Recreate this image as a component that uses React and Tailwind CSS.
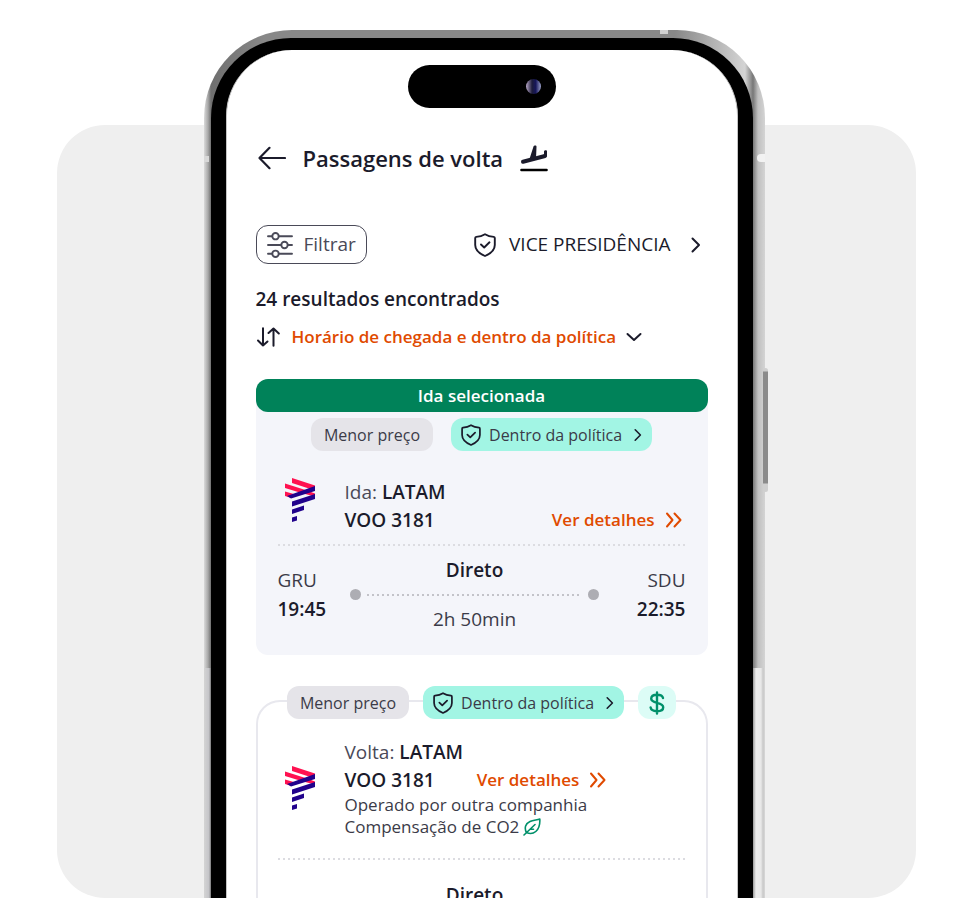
function BackIcon() {
  return (
    <svg viewBox="0 0 28 24" className="h-6 w-7" fill="none" stroke="currentColor" strokeWidth="2.200" strokeLinecap="round" strokeLinejoin="round" aria-hidden="true">
      <path d="M27 12H1.500M11.500 1.800L1.500 12 11.500 22.200" />
    </svg>
  )
}

function SortIcon() {
  return (
    <svg viewBox="0 0 24 20" className="h-5 w-6" fill="none" stroke="currentColor" strokeWidth="2" strokeLinecap="round" strokeLinejoin="round" aria-hidden="true">
      <path d="M7 1.200V18.500M2 13.500L7 18.500 11.500 14.500" />
      <path d="M17.500 18.800V1.500M12.500 6L17.500 1.500 22.800 6.500" />
    </svg>
  )
}

function ChevronRightIcon({ className }) {
  return (
    <svg viewBox="0 0 10 16" className={className} fill="none" stroke="currentColor" strokeWidth="2" strokeLinecap="round" strokeLinejoin="round" aria-hidden="true">
      <path d="M1.500 1.500L8 8 1.500 14.500" />
    </svg>
  )
}

function ChevronDownIcon() {
  return (
    <svg viewBox="0 0 16 10" className="h-[10px] w-4 text-[#1b1b2b]" fill="none" stroke="currentColor" strokeWidth="2" strokeLinecap="round" strokeLinejoin="round" aria-hidden="true">
      <path d="M1.500 2L8 8 14.500 2" />
    </svg>
  )
}

function DoubleChevronIcon() {
  return (
    <svg viewBox="0 0 17 16" className="h-4 w-[17px]" fill="none" stroke="currentColor" strokeWidth="2" strokeLinecap="round" strokeLinejoin="round" aria-hidden="true">
      <path d="M2 1.500L7.500 8 2 14.500M9.500 1.500L15.500 8 9.500 14.500" />
    </svg>
  )
}

function ShieldIcon({ className }) {
  return (
    <svg viewBox="0 0 22 24" className={className} fill="none" stroke="currentColor" strokeWidth="1.900" strokeLinecap="round" strokeLinejoin="round" aria-hidden="true">
      <path d="M11 1.200C8.500 2.700 5.500 3.600 2.200 3.900c-.6.100-1 .5-1 1.100V12c0 5.200 4 8.500 9.800 11 5.800-2.500 9.800-5.800 9.800-11V5c0-.6-.4-1-1-1.100C16.500 3.600 13.500 2.700 11 1.200z" />
      <path d="M7 11.500l3.200 3L15.500 9.300" />
    </svg>
  )
}

function LandingIcon() {
  return (
    <svg viewBox="0 0 28 28" className="size-7" fill="none" strokeLinecap="round" aria-hidden="true">
      <path d="M3 17.800L25 12" stroke="#1b1b2b" strokeWidth="4" />
      <path d="M20.500 12.500L24 10.500V7.500c0-1.400 3-1.700 3-.3V12.500z" fill="#1b1b2b" />
      <path d="M9 16.500L13.500 2.500c.5-1.500 3.300-1.500 3 .3L16 15z" fill="#1b1b2b" />
      <path d="M1.400 26H26.600" stroke="#000" strokeWidth="2.400" />
    </svg>
  )
}

function FilterIcon() {
  return (
    <svg viewBox="0 0 26 26" className="size-[26px]" fill="none" stroke="currentColor" strokeWidth="1.900" strokeLinecap="round" aria-hidden="true">
      <path d="M1 4.200h4M12 4.200h13M1 13h13M21 13h4M1 21.800h4M12 21.800h13" />
      <circle cx="8.500" cy="4.200" r="3.200" />
      <circle cx="17.500" cy="13" r="3.200" />
      <circle cx="8.500" cy="21.800" r="3.200" />
    </svg>
  )
}

function LeafIcon() {
  return (
    <svg viewBox="0 0 18 18" className="size-[18px] text-[#00906a]" fill="none" stroke="currentColor" strokeWidth="1.600" strokeLinecap="round" strokeLinejoin="round" aria-hidden="true">
      <path d="M3.500 14.500C1 10 2.500 5.500 7 3.500 10 2.200 13.500 2 16.800 1c.3 5-.8 9.800-4 12.500-2.800 2.300-6.500 2.300-9.300 1z" />
      <path d="M1 17L12 6.500M7.500 11.200h3" />
    </svg>
  )
}

function LatamLogo() {
  return (
    <svg viewBox="0 0 30 44" className="h-11 w-[30px] shrink-0" role="img" aria-label="LATAM">
      <g fill="#ff1150">
        <path d="M7 0L30 7.500V12.500L7 5z" />
        <path d="M0 5.500L22 12.500 30 15.500V18.500L18 15.500 0 10z" />
        <path d="M0 13.500L14 17.500 5 19.500 0 18z" />
      </g>
      <g fill="#21028c">
        <path d="M30 8V13L6 20.500 2 18z" />
        <path d="M30 16V21L7 28.500V23.500z" />
        <path d="M19 27.500V32L7 36V31.500z" />
        <path d="M12 38V42.500L7 44V39.500z" />
      </g>
    </svg>
  )
}

function DollarIcon() {
  return (
    <svg viewBox="0 0 16 24" className="h-6 w-4 text-[#00906a]" fill="none" stroke="currentColor" strokeWidth="2.400" strokeLinecap="round" strokeLinejoin="round" aria-hidden="true">
      <path d="M8 1.500v21M14 7C13.500 4.500 11 3.700 8 3.700 4.500 3.700 2.200 5 2.200 7.700c0 5.300 12 3 12 8.500 0 2.800-2.700 4-6.200 4-3.400 0-6-1-6.400-3.800" />
    </svg>
  )
}

function Badges({ selected }) {
  return (
    <div className={selected ? "flex justify-center gap-[18px]" : "flex justify-center gap-[14px]"}>
      <span className="flex h-[33px] items-center rounded-xl bg-[#e5e4e9] px-[13px] text-[#3b3b48]">Menor preço</span>
      <button className="flex h-[33px] items-center rounded-xl bg-[#a2f5e4] px-[10px] text-[#3b3b48]">
        <ShieldIcon className="h-[22px] w-5 text-[#1b1b2b]" />
        <span className="ml-2 mr-3">Dentro da política</span>
        <ChevronRightIcon className="h-[14px] w-2 text-[#1b1b2b]" />
      </button>
      {!selected && (
        <span className="flex h-[33px] w-[38px] items-center justify-center rounded-xl bg-[#dcfcf6]">
          <DollarIcon />
        </span>
      )}
    </div>
  )
}

function DetailsLink() {
  return (
    <a href="#detalhes" className="flex items-center gap-[10px] text-[17px] font-semibold text-[#e04a00]">
      Ver detalhes
      <DoubleChevronIcon />
    </a>
  )
}

function Divider() {
  return <div className="h-[2px] flex-1 bg-[linear-gradient(to_right,#dcdce1_2px,transparent_2px)] bg-[length:5px_2px]" />
}

function RouteLine() {
  return (
    <div className="my-[5px] flex items-center gap-[6px]">
      <span className="size-[11px] rounded-full bg-[#adadb3]" />
      <div className="h-[2px] flex-1 bg-[linear-gradient(to_right,#c3c3c9_2px,transparent_2px)] bg-[length:5px_2px]" />
      <span className="size-[11px] rounded-full bg-[#adadb3]" />
    </div>
  )
}

function Airport({ code, time, className }) {
  return (
    <div className={className}>
      <p className="text-[#3b3b48]">{code}</p>
      <p className="font-semibold">{time}</p>
    </div>
  )
}

function PhoneFrame({ children }) {
  return (
    <div className="relative mx-auto w-full max-w-[561px] rounded-t-[88px] bg-[linear-gradient(to_right,#dadada_0px,#a8a8a8_4px,#6f6f6f_7px,#888_60px,#888_calc(100%-90px),#b4b4b4_calc(100%-50px),#d4d4d4_calc(100%-20px),#777_calc(100%-12px),#c0c0c0_calc(100%-7px),#d4d4d4_100%)] pl-[7px] pr-[12px] pt-2">
      {/* side button */}
      <span className="absolute -right-[3px] top-[338px] h-[124px] w-[5px] rounded-sm bg-[linear-gradient(#cfcfcf_3px,#8b8b8b_4px,#8b8b8b_115px,#cfcfcf_116px)]" />
      {/* antenna bands */}
      <span className="absolute left-0 top-[126px] h-[6px] w-[5px] bg-[#d8d8d8]" />
      <span className="absolute right-0 top-[124px] h-2 w-2 rounded-l-full bg-[#f2f2f2]" />
      <span className="absolute right-[97px] top-0 h-1 w-2 bg-[#d0d0d0]" />
      {/* lighter reflection on the lower sides */}
      <span className="absolute bottom-0 left-0 top-[638px] w-[7px] bg-[linear-gradient(to_right,#d4d4d4,#c4c4c8_5px,#777)]" />
      <span className="absolute bottom-0 right-0 top-[638px] w-[12px] bg-[linear-gradient(to_right,#999,#ececec_3px,#e8e8e8_8px,#c8c8c8_10px,#d8d8d8)]" />
      <div className="rounded-t-[80px] bg-black px-[15px] pt-3">
        <div className="rounded-t-[66px] border-x border-[#c4c4c4] bg-white px-[29px] pt-[15px]">{children}</div>
      </div>
    </div>
  )
}

export default function App() {
  return (
    <main className="grid overflow-hidden bg-white font-['Open_Sans',sans-serif] text-[#1b1b2b]">
      <div className="col-start-1 row-start-1 ml-[57px] mr-[56px] mt-[125px] rounded-[48px] bg-[#efefef]" />

      <div className="col-start-1 row-start-1 pr-1 pt-[30px]">
        <PhoneFrame>
          <div className="mx-auto flex h-[43px] w-[148px] items-center justify-end rounded-full bg-black pr-[15px]">
            <span className="size-[15px] rounded-full bg-[linear-gradient(to_right,#b9a9c9,#1d1c3a_40%,#16165a_65%,#9aa0c8)]" />
          </div>

          <header className="mt-[34px] flex items-center pl-[2px]">
            <button aria-label="Voltar">
              <BackIcon />
            </button>
            <h1 className="ml-[17px] mr-[17px] text-[22px] font-semibold leading-[32px]">Passagens de volta</h1>
            <LandingIcon />
          </header>

          <div className="mt-[51px] flex items-center justify-between">
            <button className="flex h-[39px] items-center gap-[11px] rounded-xl border border-[#4a4a58] px-[10px] text-[19px] text-[#4a4a58]">
              <FilterIcon />
              Filtrar
            </button>
            <button className="flex items-center pr-[7px] text-[19px]">
              <ShieldIcon className="h-6 w-[22px]" />
              <span className="ml-[13px] mr-5">VICE PRESIDÊNCIA</span>
              <ChevronRightIcon className="h-4 w-[10px]" />
            </button>
          </div>

          <p className="mt-[21px] text-[19px] font-semibold leading-7">24 resultados encontrados</p>

          <button className="mt-3 flex items-center text-[17px] font-semibold leading-6 text-[#e04a00]">
            <span className="mr-3 text-[#1b1b2b]">
              <SortIcon />
            </span>
            <span className="mr-[10px]">Horário de chegada e dentro da política</span>
            <ChevronDownIcon />
          </button>

          <section className="mt-[30px] rounded-xl bg-[#f4f5fa] pb-[22px]">
            <h2 className="rounded-xl bg-[#008259] text-center text-[17px] font-semibold leading-[33px] text-white">Ida selecionada</h2>
            <div className="mt-[6px]">
              <Badges selected />
            </div>
            <div className="mx-[22px] mt-[27px] flex items-start gap-[30px] pl-[7px]">
              <LatamLogo />
              <div className="flex-1 text-[19px] leading-7">
                <p><span className="text-[#4a4a58]">Ida:</span> <b className="font-semibold">LATAM</b></p>
                <div className="flex justify-between pr-1">
                  <p className="font-semibold">VOO 3181</p>
                  <DetailsLink />
                </div>
              </div>
            </div>
            <div className="mx-[22px] mt-[10px] flex"><Divider /></div>
            <div className="mx-[22px] mt-[10px] flex items-center text-[19px]">
              <Airport code="GRU" time="19:45" className="leading-[29px]" />
              <div className="ml-6 mr-[38px] flex-1 text-center">
                <p className="font-semibold leading-7">Direto</p>
                <RouteLine />
                <p className="leading-7 text-[#3b3b48]">2h 50min</p>
              </div>
              <Airport code="SDU" time="22:35" className="text-right leading-[29px]" />
            </div>
          </section>

          <section className="mt-[45px] rounded-t-3xl border-2 border-b-0 border-[#e8e8ee] px-5">
            <div className="-mt-4">
              <Badges />
            </div>
            <div className="mt-[19px] flex items-center gap-[30px] pl-[7px]">
              <LatamLogo />
              <div className="text-[19px] leading-7">
                <p><span className="text-[#4a4a58]">Volta:</span> <b className="font-semibold">LATAM</b></p>
                <div className="flex gap-[42px]">
                  <p className="font-semibold">VOO 3181</p>
                  <DetailsLink />
                </div>
                <p className="text-[17px] leading-[22px] text-[#3b3b48]">Operado por outra companhia</p>
                <p className="flex items-center gap-1 text-[17px] leading-[22px] text-[#3b3b48]">
                  Compensação de CO2
                  <LeafIcon />
                </p>
              </div>
            </div>
            <div className="mt-5 flex"><Divider /></div>
            <div className="mt-[21px] h-[17px] overflow-hidden pr-[14px] text-center text-[19px] font-semibold leading-7">Direto</div>
          </section>
        </PhoneFrame>
      </div>
    </main>
  )
}
